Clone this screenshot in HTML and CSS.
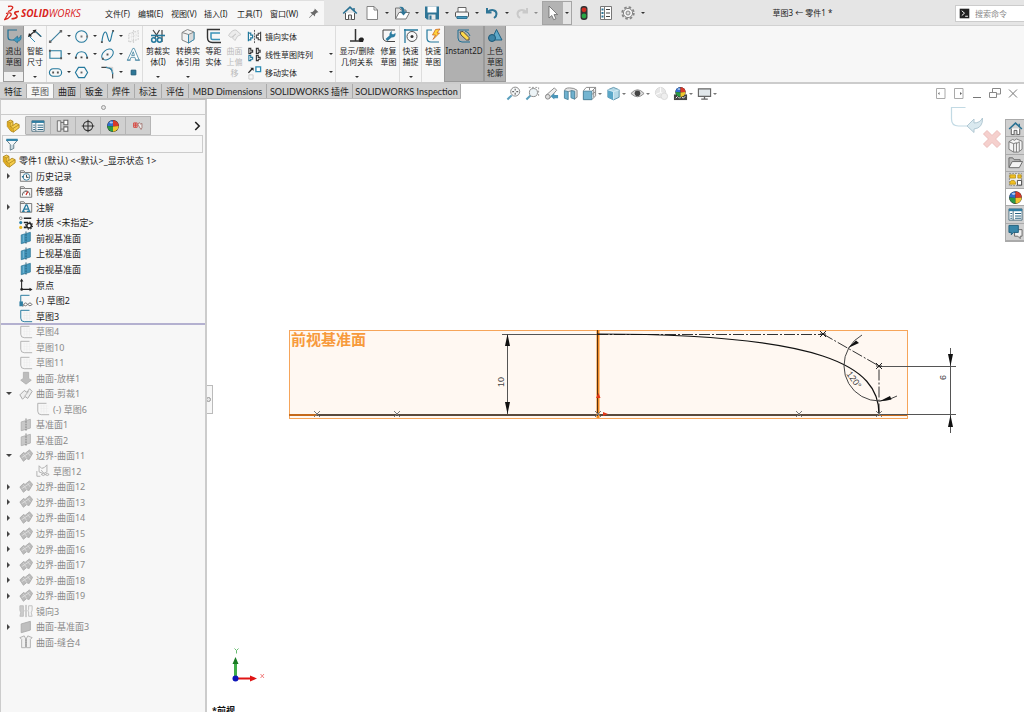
FILE: index.html
```html
<!DOCTYPE html>
<html lang="zh-CN">
<head>
<meta charset="utf-8">
<title>SOLIDWORKS - 草图3 ← 零件1</title>
<link rel="stylesheet" href="styles.css">
</head>
<body>
<svg class="defs" aria-hidden="true">
  <defs>
    <symbol id="logo" viewBox="0 0 16 16"><path d="M4 1.500C7 .8 9.500 1.200 8.500 3.200 7.800 4.800 5.500 6 4 6.500M2 8.500C6 7 8.500 8 6.500 11 5.200 13 3 14 .8 14.500L4 9" fill="none" stroke="#d9231b" stroke-width="1.300"/><path d="M15 6.500C12 6.300 10 7.300 11 8.800 12 10 14 10.500 13 12 12 13.500 9.500 13.800 7.500 13.800" fill="none" stroke="#d9231b" stroke-width="1.500"/></symbol>
    <symbol id="pin" viewBox="0 0 16 16"><path d="M9 2l5 5-2 .3-2.500 2.500-.2 3-2.800-2.800L2 14.500 1.500 14 5.500 9.500 3 7l3-.3L8.700 4z" fill="#6a6a6a"/></symbol>
    <symbol id="home" viewBox="0 0 16 16"><path d="M3.500 8v6.500h9V8" fill="#fff" stroke="#555"/><path d="M1.200 8.500L8 2.200l6.800 6.300" fill="none" stroke="#2a7193" stroke-width="1.700"/><path d="M12 3v3" stroke="#2a7193" stroke-width="1.500"/><path d="M6.500 14.500V10h3v4.500" fill="#ddd" stroke="#555"/></symbol>
    <symbol id="new" viewBox="0 0 16 16"><path d="M3 1.500h7l3.500 3.500v9.500H3z" fill="#fff" stroke="#777" stroke-width=".9"/><path d="M10 1.500V5h3.500" fill="none" stroke="#777" stroke-width=".9"/></symbol>
    <symbol id="open" viewBox="0 0 16 16"><path d="M1.500 14V3h4l1.500 2h5v3" fill="#ddd" stroke="#777"/><path d="M1.500 14L5 7.500h10.500L12 14z" fill="#fff" stroke="#777"/><path d="M5 2c4-1 5.500 1 5.500 4.500H13L9.500 10.500 6 6.500h2C8 4 7 3 5 2z" fill="#2f7596"/></symbol>
    <symbol id="save" viewBox="0 0 16 16"><path d="M1 1.500h14v13H3l-2-2z" fill="#2f7596"/><path d="M3.500 1.500h9v6h-9z" fill="#fff"/><path d="M4.500 9.500h7v5h-7z" fill="#e8e8e8"/><path d="M5.500 10.500h2v4h-2z" fill="#2f7596"/></symbol>
    <symbol id="print" viewBox="0 0 16 16"><path d="M4 7V2.500h8V7" fill="#fff" stroke="#666"/><rect x="1.500" y="7" width="13" height="5" rx="1" fill="#f5f5f5" stroke="#555"/><path d="M3 11.500h10v2H3z" fill="#4b9bbf" stroke="#2f7596"/></symbol>
    <symbol id="undo" viewBox="0 0 16 16"><path d="M3 3v4.500h4.500" fill="none" stroke="#2f7596" stroke-width="2"/><path d="M3.500 7C7 4 12.500 4.500 12.500 9c0 2-1 3-2.500 4" fill="none" stroke="#2f7596" stroke-width="2"/></symbol>
    <symbol id="redo" viewBox="0 0 16 16"><path d="M13 3v4.500H8.500M12.500 7C9 4 3.500 4.500 3.500 9c0 2 1 3 2.500 4" fill="none" stroke="#c9c9c9" stroke-width="2"/></symbol>
    <symbol id="cursor" viewBox="0 0 16 16"><path d="M4 1v12l2.800-2.500 1.900 4.200 2.200-1L9 9.600h3.600z" fill="#fff" stroke="#666" stroke-width=".8"/></symbol>
    <symbol id="traffic" viewBox="0 0 16 16"><rect x="4.500" y="1" width="7" height="14" rx="3" fill="#333"/><circle cx="8" cy="4.800" r="2.400" fill="#cf2d22"/><circle cx="8" cy="11" r="2.400" fill="#28a745"/></symbol>
    <symbol id="options" viewBox="0 0 16 16"><path d="M2.500 1.500h11v13h-11z" fill="#fff" stroke="#777"/><path d="M6.500 2v12" stroke="#777"/><path d="M8 4.500h4M8 8h4M8 11.500h4" stroke="#444"/><path d="M3.500 3.500h2v2h-2zM3.500 7h2v2h-2zM3.500 10.500h2v2h-2z" fill="#2f7596"/></symbol>
    <symbol id="gear" viewBox="0 0 16 16"><circle cx="8" cy="8" r="5.800" fill="none" stroke="#858585" stroke-width="1.800" stroke-dasharray="2.500 2.050"/><circle cx="8" cy="8" r="4.600" fill="#f4f4f4" stroke="#858585"/><circle cx="8" cy="8" r="2" fill="#ddd" stroke="#858585"/></symbol>
    <symbol id="cmd" viewBox="0 0 16 16"><path d="M1 1h14v14H1z" fill="#222"/><path d="M4 4l4 3.500L4 11M9 12h4" fill="none" stroke="#fff" stroke-width="1.400"/></symbol>

    <symbol id="exit" viewBox="0 0 16 16"><path d="M11 2H2v7q0 3 3 3h3" fill="none" stroke="#1f6f94" stroke-width="1.200"/><path d="M7.500 11.800L11.500 8v2.200q2.500 0 3.500-3 1 6-3.500 6.200V15z" fill="#3f97be" stroke="#155a79" stroke-width=".5"/></symbol>
    <symbol id="smart" viewBox="0 0 16 16"><path d="M2.500 7.500L8 3l6 5.500" fill="none" stroke="#333" stroke-width="1.200"/><path d="M1 9l1-4 3 3.300zM9.500 1.500l-4 .8 2.500 3z" fill="#222"/><path d="M2.500 8.500l5.500 5.500M8.500 3.500l6 5" stroke="#2d8cb4"/></symbol>
    <symbol id="line" viewBox="0 0 16 16"><path d="M2.500 13.500l11-11" stroke="#3b7f9e" stroke-width="1.200"/><path d="M1 12.200h2.600v2.600H1zM12.500 1h2.600v2.600h-2.600z" fill="#666"/></symbol>
    <symbol id="circle" viewBox="0 0 16 16"><circle cx="8" cy="8" r="6.200" fill="none" stroke="#24799d" stroke-width="1.100"/><path d="M7 7h2v2H7zM13 7h2v2h-2z" fill="#777"/></symbol>
    <symbol id="spline" viewBox="0 0 16 16"><path d="M2 14C3 4 6 0 7.500 6S10.500 17 12 9c.6-3 1-5 2-7" fill="none" stroke="#24799d" stroke-width="1.200"/><path d="M1 13h2v2H1zM13 1h2v2h-2z" fill="#555"/></symbol>
    <symbol id="ghostplane" viewBox="0 0 16 16"><path d="M3 5l10-3v9L3 14zM8 1v14" fill="none" stroke="#d2d2d2" stroke-width="1.200" stroke-dasharray="2 1"/><path d="M6 5v8M10.500 3v9M3 9l10-3" stroke="#dedede" stroke-dasharray="1 1"/></symbol>
    <symbol id="rect" viewBox="0 0 16 16"><path d="M2 4h12v8H2z" fill="none" stroke="#24799d" stroke-width="1.200"/><path d="M1 3h2v2H1zM13 11h2v2h-2z" fill="#555"/></symbol>
    <symbol id="arc" viewBox="0 0 16 16"><path d="M2 11C3 3 13 3 14 11" fill="none" stroke="#24799d" stroke-width="1.200"/><path d="M1 10.500h2v2H1zM13 10.500h2v2h-2zM7 10h2v2H7z" fill="#444"/></symbol>
    <symbol id="ellipse" viewBox="0 0 16 16"><ellipse cx="8" cy="8" rx="7" ry="4.800" transform="rotate(-40 8 8)" fill="none" stroke="#24799d" stroke-width="1.100"/><path d="M7 7h2v2H7zM2 11.500h2v2H2z" fill="#555"/></symbol>
    <symbol id="text" viewBox="0 0 16 16"><path d="M1.500 14L7.300 1.500h1.500L14 14h-3.500l-1-3H5.300L4 14zM6 9h3L7.700 5z" fill="#fff" stroke="#4c89a5" stroke-width=".9"/><path d="M1 14h4M9.500 14H15" stroke="#4c89a5"/></symbol>
    <symbol id="slot" viewBox="0 0 16 16"><rect x="1.500" y="4" width="13" height="8" rx="4" fill="none" stroke="#24799d" stroke-width="1.200"/><path d="M4.500 7h2v2h-2zM9.500 7h2v2h-2z" fill="#555"/></symbol>
    <symbol id="polygon" viewBox="0 0 16 16"><path d="M4.800 2.500h6.400L14.500 8l-3.300 5.500H4.800L1.500 8z" fill="none" stroke="#24799d" stroke-width="1.200"/><path d="M7 7h2v2H7z" fill="#666"/></symbol>
    <symbol id="fillet" viewBox="0 0 16 16"><path d="M1.500 2.500h5q7 0 7 7v5" fill="none" stroke="#444" stroke-width="1.200"/><path d="M6.500 2.500q7 0 7 7" fill="none" stroke="#2d8cb4" stroke-width="1.400"/><path d="M8 2.500h5.500V8" fill="none" stroke="#bbb" stroke-width=".7"/></symbol>
    <symbol id="point" viewBox="0 0 16 16"><path d="M5.500 5.500h5v5h-5z" fill="#2d7797" stroke="#1d5975"/></symbol>
    <symbol id="trim" viewBox="0 0 16 16"><path d="M3 2l6 8.500M9.500 2L4.500 10.500M12 2v12" stroke="#444" stroke-width="1.200"/><circle cx="3.800" cy="12" r="2.200" fill="none" stroke="#24799d" stroke-width="1.500"/><circle cx="9.600" cy="12" r="2.200" fill="none" stroke="#24799d" stroke-width="1.500"/><path d="M1 7.500h14" stroke="#24799d" stroke-width="1.600"/></symbol>
    <symbol id="convert" viewBox="0 0 16 16"><path d="M2 4.500l5.500-3L14 4v7.500L8.500 15 2 12z" fill="#f2f2f2" stroke="#888"/><path d="M8.500 6.500V15L14 11.500V4z" fill="#d9d9d9"/><path d="M2 4.500l6.500 2L14 4M8.500 15V6.500" fill="none" stroke="#888"/><path d="M8.500 6.500V15L14 11.500V4" fill="none" stroke="#358aae"/></symbol>
    <symbol id="offset" viewBox="0 0 16 16"><path d="M14 1.500H1.500v8q0 5 5 5H15" fill="none" stroke="#333" stroke-width="1.400"/><path d="M14 5H5v5q0 1.500 1.500 1.500H14" fill="none" stroke="#3b92b8" stroke-width="1.500"/></symbol>
    <symbol id="surfoff" viewBox="0 0 16 16"><path d="M1.500 7.500Q5 1.500 9 2l5 4.500q-4 .5-6 6L5.500 10q1-3 3.500-4L4 9.500z" fill="#ececec" stroke="#ccc"/></symbol>
    <symbol id="mirror" viewBox="0 0 16 16"><path d="M1.500 3v10M1.500 4.500H4v2h2v3H4v2H1.500" fill="none" stroke="#24799d" stroke-width="1.300"/><path d="M14.500 3v10M14.500 4.500H12v2h-2v3h2v2h2.500" fill="#fff" stroke="#444" stroke-width="1.200"/><path d="M8 1v14" stroke="#555" stroke-dasharray="2 1"/></symbol>
    <symbol id="pattern" viewBox="0 0 16 16"><g fill="#fff" stroke="#333" stroke-width="1.200"><path d="M2 1.500h2v2h2v2H4v1.500H2zM10 1.500h2v2h2v2h-2v1.500h-2zM10 9h2v2h2v2h-2v1.500h-2z"/><path d="M2 9h2v2h2v2H4v1.500H2z" stroke="#24799d"/></g></symbol>
    <symbol id="move" viewBox="0 0 16 16"><path d="M9.500 2h5v5h-5z" fill="#fff" stroke="#2d8cb4" stroke-width="1.400"/><path d="M2 10.500h4.500V15H2z" fill="none" stroke="#ccc"/><path d="M1.500 8.500L5.500 4" stroke="#222" stroke-width="1.300"/><path d="M3.500 3h3.500v3.500z" fill="#222"/></symbol>
    <symbol id="relations" viewBox="0 0 16 16"><path d="M6.500 1v12M1 13h11" stroke="#333" stroke-width="1.500"/><path d="M9.500 11l2-1.500h2L15 11l-1 3h-3.500z" fill="#222"/></symbol>
    <symbol id="repair" viewBox="0 0 16 16"><path d="M14 2H2v7q0 4.500 5 4.500h7" fill="none" stroke="#444"/><path d="M4.500 11l4-3.500Q8 4.500 11 3l-.5 2.500 1.500 1L14.500 5q.5 4.500-4 4.500L6.500 13z" fill="#2d7da1"/></symbol>
    <symbol id="snap" viewBox="0 0 16 16"><path d="M2 1v14M1 2h14" stroke="#24799d" stroke-width="1.300"/><circle cx="9" cy="8.500" r="5" fill="none" stroke="#555"/><circle cx="9" cy="8.500" r="1.500" fill="#333"/></symbol>
    <symbol id="rapid" viewBox="0 0 16 16"><path d="M7 2H2v8q0 4 4 4h8" fill="none" stroke="#24799d" stroke-width="1.200"/><path d="M10.500 1.500L7.500 7h3L8 11.500 14.500 5H12l3-4z" fill="#ffd23b" stroke="#c65a17" stroke-width=".7"/></symbol>
    <symbol id="instant" viewBox="0 0 16 16"><path d="M13 2H2v8q0 4 4 4h8" fill="none" stroke="#1f6f94"/><path d="M4 4l3-.5 6 6V12h-2.500L5 7z" fill="#ffd94a" stroke="#333" stroke-width=".8"/><path d="M9 3q4 1 5 5" fill="none" stroke="#1f6f94"/></symbol>
    <symbol id="shaded" viewBox="0 0 16 16"><path d="M9.500 1.500L15 12H4.500z" fill="#5fa9c9" stroke="#1f6284"/><circle cx="5" cy="10" r="3.500" fill="#3e85a7" stroke="#1f5876"/></symbol>

    <symbol id="zoomfit" viewBox="0 0 16 16"><path d="M1.500 14.500L6 10" stroke="#5a9fbd" stroke-width="2.200"/><circle cx="9.800" cy="6" r="4.800" fill="#f6f8f9" stroke="#888"/><path d="M9.800 2.800v2M9.800 7.200v2M6.600 6h2M11 6h2" stroke="#666" stroke-width="1.200"/></symbol>
    <symbol id="zoomarea" viewBox="0 0 16 16"><path d="M1.500 14.500L6 10" stroke="#5a9fbd" stroke-width="2.200"/><circle cx="9" cy="7" r="4.300" fill="#edf4f7" stroke="#888"/><path d="M4 1.500h10.500V12" fill="none" stroke="#999" stroke-dasharray="2 1.500"/></symbol>
    <symbol id="prevview" viewBox="0 0 16 16"><path d="M2 10l9-8 2.500 2.500L6 13z" fill="#eee" stroke="#888"/><circle cx="4" cy="11.500" r="2.500" fill="#ddd" stroke="#888"/><path d="M7 11l4-3.500v2h4v3.500h-4v1.500z" fill="#4b95b8"/></symbol>
    <symbol id="section" viewBox="0 0 16 16"><path d="M1.500 5Q2 2 7 2t8 2.500V12l-3 2V6Q10 4 5.500 6" fill="#e6e6e6" stroke="#888"/><path d="M1.500 5L5.500 6v8.500l-4-1.500zM8.500 5l4 .5V14l-4-1.500z" fill="#6fb1cf" stroke="#4d87a1"/></symbol>
    <symbol id="orient" viewBox="0 0 16 16"><path d="M4.500 1.500h10v9l-4 4H1.500V5z" fill="#fff" stroke="#888"/><path d="M1.500 5.500h9v9h-9z" fill="#74b5d1" stroke="#4d87a1"/><path d="M10.500 5.500l4-4M8 1.500v3M10.500 9l4-3M12.500 4v8" stroke="#888"/></symbol>
    <symbol id="display" viewBox="0 0 16 16"><path d="M2 4l6-2.500L14 4v8l-6 2.800L2 12z" fill="#b5d9e7" stroke="#5d94ac"/><path d="M2 4l6 2v8.800L2 12z" fill="#5aa7c8"/><path d="M2 4l6 2 6-2M8 6v8.500" stroke="#d8edf5" fill="none"/></symbol>
    <symbol id="eye" viewBox="0 0 16 16"><path d="M1 8q7-8 14 0-7 7-14 0z" fill="#ddd" stroke="#888"/><circle cx="8" cy="7.800" r="3" fill="#444"/></symbol>
    <symbol id="ballgray" viewBox="0 0 16 16"><circle cx="7" cy="7" r="5.500" fill="#e6e6e6" stroke="#d8d8d8"/><path d="M7 1.500V7l5 2M7 7l-5 2" stroke="#fff" fill="none"/><circle cx="11" cy="11" r="3.500" fill="#eee" stroke="#dadada"/></symbol>
    <symbol id="ball" viewBox="0 0 16 16"><circle cx="8" cy="8" r="6.800" fill="#222"/><path d="M8 1.500A6.500 6.500 0 0 0 1.500 8L8 8.500z" fill="#2e6fd0"/><path d="M8 1.500A6.500 6.500 0 0 1 14.500 8L8 8.500z" fill="#d93829"/><path d="M1.500 8A6.500 6.500 0 0 0 8 14.500v-6z" fill="#2b9a45"/><path d="M14.500 8A6.500 6.500 0 0 1 8 14.500v-6z" fill="#f0c72f"/><ellipse cx="6" cy="4" rx="2" ry="1.200" fill="#fff" opacity=".6"/></symbol>
    <symbol id="scene" viewBox="0 0 16 16"><path d="M1 9h14v6H1z" fill="#444"/><path d="M3 13l2-2 2 2 2-2 2 2 2-2" stroke="#fff" fill="none"/><use href="#ball" x="1.500" y="0" width="13" height="13"/></symbol>
    <symbol id="monitor" viewBox="0 0 16 16"><path d="M1.500 3h13v8h-13z" fill="#e1e7ea" stroke="#666" stroke-width="1.200"/><path d="M8 11v3M4.500 14h7" stroke="#666" stroke-width="1.400"/></symbol>
    <symbol id="winleft" viewBox="0 0 16 16"><path d="M3.500 3.500h8.500v10H3.500z" fill="none" stroke="#aaa"/><path d="M6.500 7v3L5 8.500z" fill="#666"/></symbol>
    <symbol id="winright" viewBox="0 0 16 16"><path d="M3.500 3.500h8.500v10H3.500z" fill="none" stroke="#aaa"/><path d="M9 7v3l2-1.500z" fill="#666"/></symbol>
    <symbol id="winmin" viewBox="0 0 16 16"><path d="M4 12.500h8" stroke="#777"/></symbol>
    <symbol id="winres" viewBox="0 0 16 16"><path d="M2.500 7.500h7v5h-7zM5.500 7.500v-4h8v5.500h-4" fill="none" stroke="#888"/></symbol>
    <symbol id="winclose" viewBox="0 0 16 16"><path d="M4 4.500l8 8M12 4.500l-8 8" stroke="#777"/></symbol>

    <symbol id="part" viewBox="0 0 16 16"><path d="M1.500 3L5 1.200l3 1.500v4.500l3.500-2.400L15 6.500V10l-6.500 5-3-1.200L1.500 8.500z" fill="#f6cd4c" stroke="#a57c14" stroke-width=".9"/><path d="M1.500 3l3.300 1.500L8 2.700M4.800 4.500V9L8 7.200M4.800 9L8 10.800l7-4.300M8 10.800l.5 4" fill="none" stroke="#a57c14" stroke-width=".8"/><path d="M1.800 3.500l2.600 1.300V9l3.200 2v3.200L5.700 13.500 1.800 8.300z" fill="#dda91f"/></symbol>
    <symbol id="props" viewBox="0 0 16 16"><path d="M1 2h14v12H1z" fill="#fff" stroke="#4d6f80"/><path d="M1 2h14v2.500H1z" fill="#2f7ea3"/><path d="M5.500 4v10" stroke="#4d6f80"/><path d="M7.500 7H14M7.500 9.500H14M7.500 12H14M2.500 7h2M2.500 9.500h2M2.500 12h2" stroke="#2b6482" stroke-width="1.100"/></symbol>
    <symbol id="config" viewBox="0 0 16 16"><path d="M1.500 2h4v12h-4zM5.500 4h4M5.500 11.500h4" fill="#eee" stroke="#666"/><path d="M9 1.500h4.500v5H9zM9 9h4.500v5H9z" fill="#fff" stroke="#666" stroke-width="1.200"/></symbol>
    <symbol id="target" viewBox="0 0 16 16"><circle cx="8" cy="8" r="5.300" fill="none" stroke="#333" stroke-width="1.200"/><path d="M8 .8v14.400M.8 8h14.400" stroke="#333" stroke-width="1.200"/></symbol>
    <symbol id="cam" viewBox="0 0 16 16"><path d="M3 4.500h4v5H3zM3 7h4M5 4.500v5" fill="none" stroke="#d8463e" stroke-width="1.100"/><path d="M8 6l1.500-2 1.500 2 1.500-1v5l-1 2-2-3z" fill="#eee" stroke="#9a6964" stroke-width=".9"/></symbol>
    <symbol id="funnel" viewBox="0 0 16 16"><path d="M1.500 3.500h13L10 8.500V13l-4 2V8.500z" fill="#f3f7f9" stroke="#506e7c"/><path d="M1.500 2h13v2.500h-13z" fill="#3184aa"/><path d="M8 9v5" stroke="#91afbc"/></symbol>
    <symbol id="folder" viewBox="0 0 16 16"><path d="M1.500 14V2h4L7 4h7.500v10z" fill="#f4f4f4" stroke="#6b6b6b"/><path d="M1.500 4h5" stroke="#6b6b6b"/></symbol>
    <symbol id="history" viewBox="0 0 16 16"><use href="#folder" width="16" height="16"/><circle cx="8.500" cy="9" r="3.800" fill="#fff" stroke="#2d7698"/><path d="M8.500 6.500V9.500h2.500" fill="none" stroke="#222"/><path d="M3 8h3L4.500 10.500z" fill="#2d7698"/></symbol>
    <symbol id="sensor" viewBox="0 0 16 16"><use href="#folder" width="16" height="16"/><path d="M4 12a4.200 4.200 0 1 1 8.200 0" fill="#fff" stroke="#555"/><path d="M8 11.500l2-4" stroke="#d02c24" stroke-width="1.500"/><path d="M5 9h1.500M8 6.500V8" stroke="#555"/></symbol>
    <symbol id="note" viewBox="0 0 16 16"><use href="#folder" width="16" height="16"/><path d="M3.500 13h3M9 13h4M4.500 13L8 5.500h1L12 13M6 10.500h4.500" fill="none" stroke="#25799e" stroke-width="1.500"/></symbol>
    <symbol id="material" viewBox="0 0 16 16"><circle cx="2" cy="2.500" r="1.500" fill="#fff" stroke="#777"/><circle cx="2" cy="7.500" r="1.800" fill="#2d83aa"/><circle cx="2" cy="13" r="1.800" fill="#e8b51f"/><path d="M5.500 2.500H14M5.500 7.500H10M5.500 13H8" stroke="#222" stroke-width="1.800"/><circle cx="11.500" cy="11" r="4" fill="none" stroke="#222" stroke-width="1.200" stroke-dasharray="1.600 1.500"/><circle cx="11.500" cy="11" r="2.600" fill="#fff" stroke="#222" stroke-width="1.700"/></symbol>
    <symbol id="plane" viewBox="0 0 16 16"><path d="M2.500 4.500L13 1.500v10L2.500 14.500z" fill="#4698bd" stroke="#2c7495" stroke-width=".8"/><path d="M8 .5v15" stroke="#1f536d" stroke-dasharray="2 1"/><path d="M5 4.500v8" stroke="#80bdd7"/></symbol>
    <symbol id="origin" viewBox="0 0 16 16"><path d="M3 3v10h10" fill="none" stroke="#222" stroke-width="1.200"/><path d="M1 4l2-3.500L5 4zM12 11l3.500 2L12 15z" fill="#222"/><circle cx="3" cy="13" r="1.500" fill="#222"/></symbol>
    <symbol id="sketch" viewBox="0 0 16 16"><path d="M12 1.500H2v9q0 4 4 4h9" fill="none" stroke="#24799d" stroke-width="1.100"/><path d="M5 4.500h9M5 7.500h9M5 10.500h9M6 3v10M9 3v10M12 3v10" stroke="#e8e8e8" stroke-width=".6"/></symbol>
    <symbol id="sketchg" viewBox="0 0 16 16"><path d="M12 1.500H2v9q0 4 4 4h9" fill="none" stroke="#aaa"/><path d="M5 4.500h9M5 7.500h9M5 10.500h9M6 3v10M9 3v10M12 3v10" stroke="#ececec" stroke-width=".6"/></symbol>
    <symbol id="sketchd" viewBox="0 0 16 16"><path d="M12 1.500H2v9" fill="none" stroke="#24799d" stroke-width="1.100"/><path d="M.5 8.500h4V14h-4z" fill="#2e7ea2"/><path d="M5 12q2.500-3.500 5 0-2.500 3-5 0zM10 12q2.500-3.500 5 0-2.500 3-5 0zM4 14l2-1" fill="#fff" stroke="#666"/></symbol>
    <symbol id="loft" viewBox="0 0 16 16"><path d="M5 1.500h6v7l3 2L8 15l-6-4.500 3-2z" fill="#bdbdbd" stroke="#b0b0b0"/></symbol>
    <symbol id="strim" viewBox="0 0 16 16"><path d="M1 9l5-5 3 2 3-4 3 3-5 8-3-2-3 3z" fill="#eee" stroke="#a0a0a0"/><path d="M6 11l5-6" stroke="#aaa"/></symbol>
    <symbol id="boundary" viewBox="0 0 16 16"><path d="M1 8l4-4 2 1 5-4 3.500 4-4 7-3-1L5 14z" fill="#bbb" stroke="#a8a8a8"/><path d="M3 10l9-6M5 6l4 5M10 4l3 4" stroke="#ddd"/></symbol>
    <symbol id="planeg" viewBox="0 0 16 16"><path d="M2.500 4.500L13 1.500v10L2.500 14.500z" fill="#c8c8c8" stroke="#b0b0b0"/><path d="M8 .5v15" stroke="#777" stroke-dasharray="2 1"/></symbol>
    <symbol id="surfg" viewBox="0 0 16 16"><path d="M2.500 4.500L13 1.500v10L2.500 14.500z" fill="#bfbfbf" stroke="#aaa"/></symbol>
    <symbol id="derived" viewBox="0 0 16 16"><path d="M1 8v6h4M3.500 9V2l3 3 3-1 3-3v8l-4 2zM6 7l4 5" fill="none" stroke="#aaa"/><path d="M6 12q2.500-3 4.500 0-2 2.500-4.500 0zM10.500 12q2.500-3 4.500 0-2 2.500-4.500 0z" fill="#eee" stroke="#aaa"/></symbol>
    <symbol id="mirrorg" viewBox="0 0 16 16"><path d="M1 2h4v4l1 2-1 1v5H1l1-4-1-3z" fill="#ccc" stroke="#bbb"/><path d="M15 2h-4v4l-1 2 1 1v5h4l-1-4 1-3z" fill="#f4f4f4" stroke="#bbb"/><path d="M8 1v14" stroke="#999"/></symbol>
    <symbol id="knit" viewBox="0 0 16 16"><path d="M1 3l5-2 1.500 3v10.500H3V5zM15 3l-5-2-1.500 3v10.500H13V5z" fill="#f0f0f0" stroke="#aaa"/><path d="M8 4v10" stroke="#888" stroke-dasharray="1 1"/></symbol>

    <symbol id="library" viewBox="0 0 16 16"><path d="M1 4l4-2.500 2 1 2-1.500 2.500 1L15 3.500V12l-4 3H6l-5-3z" fill="#f5f5f5" stroke="#777"/><path d="M1 4l5 2v9M6 6l3-1v10M9 6l3-2M12 4v10" fill="none" stroke="#777"/></symbol>
    <symbol id="explorer" viewBox="0 0 16 16"><path d="M1 13V3h4l1.500 2H13v2.500" fill="#bbb" stroke="#666"/><path d="M1 13.500L4.500 7h11L12 13.500z" fill="#f4f4f4" stroke="#666"/></symbol>
    <symbol id="palette" viewBox="0 0 16 16"><path d="M1.500 1.500h13v13h-13z" fill="#eee" stroke="#888" stroke-dasharray="2 1"/><path d="M2 3h6v3.500H2zM10.500 3H14v3.500h-3.500zM2 13v-2l1.500-2h3L8 11v2z" fill="#f1bf21" stroke="#b08c1a" stroke-width=".8"/><path d="M10 9h4.500v5H10z" fill="#fff" stroke="#444"/></symbol>
    <symbol id="forum" viewBox="0 0 16 16"><path d="M7 6h8v7h-2v2.500L10.500 13H7z" fill="#eee" stroke="#666"/><path d="M1 1.500h10v7.500H6L3.500 11.500V9H1z" fill="#3986a9" stroke="#205f7d"/></symbol>
  </defs>
</svg>

<header class="titlebar">
  <div class="menubar">
    <svg class="logo"><use href="#logo"/></svg>
    <span class="brand"><b>SOLID</b>WORKS</span>
    <nav class="menus">
      <button>文件(F)</button><button>编辑(E)</button><button>视图(V)</button><button>插入(I)</button><button>工具(T)</button><button>窗口(W)</button>
    </nav>
    <button class="pin" aria-label="固定"><svg><use href="#pin"/></svg></button>
  </div>
  <div class="quick">
    <button class="ic home" aria-label="主页"><svg><use href="#home"/></svg></button>
    <button class="ic" aria-label="新建"><svg><use href="#new"/></svg></button><button class="drop" aria-label="新建选项"></button>
    <button class="ic" aria-label="打开"><svg><use href="#open"/></svg></button><button class="drop" aria-label="打开选项"></button>
    <button class="ic" aria-label="保存"><svg><use href="#save"/></svg></button><button class="drop" aria-label="保存选项"></button>
    <button class="ic" aria-label="打印"><svg><use href="#print"/></svg></button><button class="drop" aria-label="打印选项"></button>
    <button class="ic" aria-label="撤销"><svg><use href="#undo"/></svg></button><button class="drop" aria-label="撤销选项"></button>
    <button class="ic" aria-label="重做"><svg><use href="#redo"/></svg></button><button class="drop dim-drop" aria-label="重做选项"></button>
    <span class="picker"><button class="pick" aria-label="选择"><svg><use href="#cursor"/></svg></button><button class="drop" aria-label="选择选项"></button></span>
    <button class="ic" aria-label="重建"><svg><use href="#traffic"/></svg></button>
    <button class="ic props" aria-label="文件属性"><svg><use href="#options"/></svg></button>
    <button class="ic props" aria-label="选项"><svg><use href="#gear"/></svg></button><button class="drop" aria-label="更多选项"></button>
  </div>
  <h1 class="doc">草图3 ← 零件1 *</h1>
  <label class="search"><svg><use href="#cmd"/></svg><input type="text" placeholder="搜索命令" aria-label="搜索命令"></label>
</header>

<section class="ribbon">
  <button class="tool w21 on exit"><svg><use href="#exit"/></svg><span>退出<br>草图</span><i class="caret"></i></button>
  <button class="tool w22"><svg><use href="#smart"/></svg><span>智能<br>尺寸</span><i class="caret"></i></button>
  <div class="entities">
    <button aria-label="直线"><svg><use href="#line"/></svg><i class="caret"></i></button><button aria-label="圆"><svg><use href="#circle"/></svg><i class="caret"></i></button><button aria-label="样条曲线"><svg><use href="#spline"/></svg><i class="caret"></i></button><button aria-label="基准面"><svg><use href="#ghostplane"/></svg></button>
    <button aria-label="矩形"><svg><use href="#rect"/></svg><i class="caret"></i></button><button aria-label="圆弧"><svg><use href="#arc"/></svg><i class="caret"></i></button><button aria-label="椭圆"><svg><use href="#ellipse"/></svg><i class="caret"></i></button><button aria-label="文字"><svg><use href="#text"/></svg></button>
    <button aria-label="槽口"><svg><use href="#slot"/></svg><i class="caret"></i></button><button aria-label="多边形"><svg><use href="#polygon"/></svg></button><button aria-label="圆角"><svg><use href="#fillet"/></svg><i class="caret"></i></button><button aria-label="点"><svg><use href="#point"/></svg></button>
  </div>
  <button class="tool w30"><svg><use href="#trim"/></svg><span>剪裁实<br>体(I)</span><i class="caret"></i></button>
  <button class="tool w30"><svg><use href="#convert"/></svg><span>转换实<br>体引用</span><i class="caret"></i></button>
  <button class="tool w21"><svg><use href="#offset"/></svg><span>等距<br>实体</span></button>
  <button class="tool w21" disabled><svg><use href="#surfoff"/></svg><span>曲面<br>上偏<br>移</span></button>
  <div class="stack">
    <button><svg><use href="#mirror"/></svg>镜向实体</button>
    <button><svg><use href="#pattern"/></svg>线性草图阵列<i class="caret"></i></button>
    <button><svg><use href="#move"/></svg>移动实体<i class="caret"></i></button>
  </div>
  <button class="tool w42"><svg><use href="#relations"/></svg><span>显示/删除<br>几何关系</span><i class="caret"></i></button>
  <button class="tool w22 sep"><svg><use href="#repair"/></svg><span>修复<br>草图</span></button>
  <button class="tool w22 sep"><svg><use href="#snap"/></svg><span>快速<br>捕捉</span><i class="caret"></i></button>
  <button class="tool w22"><svg><use href="#rapid"/></svg><span>快速<br>草图</span></button>
  <button class="tool w40 on"><svg><use href="#instant"/></svg><span>Instant2D</span></button>
  <button class="tool w22 on"><svg><use href="#shaded"/></svg><span>上色<br>草图<br>轮廓</span></button>
</section>

<div class="tabrow">
  <nav class="tabs">
    <button>特征</button><button class="active">草图</button><button>曲面</button><button>钣金</button><button>焊件</button><button>标注</button><button>评估</button><button class="w77">MBD Dimensions</button><button class="w86">SOLIDWORKS 插件</button><button class="w108">SOLIDWORKS Inspection</button>
  </nav>
  <div class="hud">
    <button aria-label="整屏显示"><svg><use href="#zoomfit"/></svg></button>
    <button aria-label="局部放大"><svg><use href="#zoomarea"/></svg></button>
    <button aria-label="上一视图"><svg><use href="#prevview"/></svg></button>
    <button aria-label="剖面视图"><svg><use href="#section"/></svg></button>
    <button aria-label="视图定向"><svg><use href="#orient"/></svg><i class="caret"></i></button>
    <button aria-label="显示样式"><svg><use href="#display"/></svg><i class="caret"></i></button>
    <button aria-label="隐藏/显示"><svg><use href="#eye"/></svg><i class="caret"></i></button>
    <button aria-label="编辑外观"><svg><use href="#ballgray"/></svg></button>
    <button aria-label="应用布景"><svg><use href="#scene"/></svg><i class="caret"></i></button>
    <button aria-label="视图设置"><svg><use href="#monitor"/></svg><i class="caret"></i></button>
  </div>
  <div class="winbtns">
    <button aria-label="左侧平铺"><svg><use href="#winleft"/></svg></button>
    <button aria-label="右侧平铺"><svg><use href="#winright"/></svg></button>
    <button aria-label="最小化"><svg><use href="#winmin"/></svg></button>
    <button aria-label="还原"><svg><use href="#winres"/></svg></button>
    <button aria-label="关闭"><svg><use href="#winclose"/></svg></button>
  </div>
</div>

<main class="work">
  <aside class="side">
    <div class="grip"><i class="dot"></i></div>
    <div class="panes">
      <button class="active" aria-label="设计树"><svg><use href="#part"/></svg></button>
      <button aria-label="属性"><svg><use href="#props"/></svg></button>
      <button aria-label="配置"><svg><use href="#config"/></svg></button>
      <button aria-label="尺寸专家"><svg><use href="#target"/></svg></button>
      <button aria-label="外观"><svg><use href="#ball"/></svg></button>
      <button aria-label="加工"><svg><use href="#cam"/></svg></button>
      <button class="more" aria-label="更多"><svg viewBox="0 0 16 16"><path d="M6 3.500l4.500 4.500L6 12.500" fill="none" stroke="#222" stroke-width="1.800"/></svg></button>
    </div>
    <label class="filter"><svg><use href="#funnel"/></svg><input type="text" aria-label="过滤"></label>
    <ul class="tree">
      <li class="root"><svg><use href="#part"/></svg>零件1 (默认) &lt;&lt;默认&gt;_显示状态 1&gt;</li>
      <li><i class="tw"></i><svg><use href="#history"/></svg>历史记录</li>
      <li><svg><use href="#sensor"/></svg>传感器</li>
      <li><i class="tw"></i><svg><use href="#note"/></svg>注解</li>
      <li><svg><use href="#material"/></svg>材质 &lt;未指定&gt;</li>
      <li><svg><use href="#plane"/></svg>前视基准面</li>
      <li><svg><use href="#plane"/></svg>上视基准面</li>
      <li><svg><use href="#plane"/></svg>右视基准面</li>
      <li><svg><use href="#origin"/></svg>原点</li>
      <li><svg><use href="#sketchd"/></svg>(-) 草图2</li>
      <li><svg><use href="#sketch"/></svg>草图3</li>
      <li class="off rollback"><svg><use href="#sketchg"/></svg>草图4</li>
      <li class="off"><svg><use href="#sketchg"/></svg>草图10</li>
      <li class="off"><svg><use href="#sketchg"/></svg>草图11</li>
      <li class="off"><svg><use href="#loft"/></svg>曲面-放样1</li>
      <li class="off"><i class="tw open"></i><svg><use href="#strim"/></svg>曲面-剪裁1</li>
      <li class="off child"><svg><use href="#sketchg"/></svg>(-) 草图6</li>
      <li class="off"><svg><use href="#planeg"/></svg>基准面1</li>
      <li class="off"><svg><use href="#planeg"/></svg>基准面2</li>
      <li class="off"><i class="tw open"></i><svg><use href="#boundary"/></svg>边界-曲面11</li>
      <li class="off child"><svg><use href="#derived"/></svg>草图12</li>
      <li class="off"><i class="tw"></i><svg><use href="#boundary"/></svg>边界-曲面12</li>
      <li class="off"><i class="tw"></i><svg><use href="#boundary"/></svg>边界-曲面13</li>
      <li class="off"><i class="tw"></i><svg><use href="#boundary"/></svg>边界-曲面14</li>
      <li class="off"><i class="tw"></i><svg><use href="#boundary"/></svg>边界-曲面15</li>
      <li class="off"><i class="tw"></i><svg><use href="#boundary"/></svg>边界-曲面16</li>
      <li class="off"><i class="tw"></i><svg><use href="#boundary"/></svg>边界-曲面17</li>
      <li class="off"><i class="tw"></i><svg><use href="#boundary"/></svg>边界-曲面18</li>
      <li class="off"><i class="tw"></i><svg><use href="#boundary"/></svg>边界-曲面19</li>
      <li class="off"><svg><use href="#mirrorg"/></svg>镜向3</li>
      <li class="off"><i class="tw"></i><svg><use href="#surfg"/></svg>曲面-基准面3</li>
      <li class="off"><svg><use href="#knit"/></svg>曲面-缝合4</li>
    </ul>
  </aside>

  <section class="view">
    <svg class="canvas">
      <g transform="translate(-207 -99)">
        <rect x="289.500" y="330.500" width="618" height="88" fill="#fff8f2" stroke="#f6a55a"/>
        <text x="291" y="345" class="plane-name">前视基准面</text>
        <path d="M289 415H907" stroke="#c46a1c" stroke-width="2"/>
        <path d="M317 415H879" stroke="#5a4a3c" stroke-width="2"/>
        <path d="M598 330v88" stroke="#f28a22" stroke-width="3"/><path d="M597.500 330v86" stroke="#5a3210"/>
        <path d="M502 334.500H597M507.500 335v79" stroke="#555"/>
        <path d="M507.500 334l2.500 12h-5zM507.500 414l2.500-12h-5z" fill="#111"/>
        <path d="M597 334.500H823" stroke="#333" stroke-dasharray="11 2 2 2" fill="none"/>
        <path d="M823 334L879 366V414" stroke="#333" stroke-dasharray="11 2 2 2" fill="none"/>
        <path d="M597 334C823 334 879 366 879 414" stroke="#111" stroke-width="1.200" fill="none"/>
        <path d="M862 335A35 35 0 0 0 844 366A35 35 0 0 0 897 396" stroke="#444" fill="none"/>
        <path d="M848 348l8-7.500 3 2.500zM879 401.500l11-5.500 1.500 3.500z" fill="#111"/>
        <path d="M879 366.500h77M879 414.500h77M950.500 348v85" stroke="#555"/>
        <path d="M950.500 366l2.500-12h-5zM950.500 415l2.500 12h-5z" fill="#111"/>
        <g stroke="#222"><path d="M820 331l6 6M826 331l-6 6M820 334h6M876 363l6 6M882 363l-6 6M876 366h6"/></g>
        <g stroke="#777"><path d="M314 411l6 6M320 411l-6 6M394 411l6 6M400 411l-6 6M595 411l6 6M601 411l-6 6M796 411l6 6M802 411l-6 6M876 411l6 6M882 411l-6 6"/></g>
        <path d="M596 398l2.500-5 2 5zM603 412l5 2-5 2z" fill="#e33818"/>
        <text class="dim" transform="translate(504 387) rotate(-90)">10</text>
        <text class="dim" transform="translate(946 380) rotate(-90)">6</text>
        <text class="dim" transform="translate(846 374) rotate(54)">120°</text>
        <path d="M235.500 678v-14" stroke="#3fae49" stroke-width="3"/><path d="M235.500 657l3 7h-6z" fill="#187a22"/>
        <path d="M236 678.500h14" stroke="#e01414" stroke-width="2"/><path d="M257 678.500l-7-3v6z" fill="#e01414"/>
        <circle cx="235.500" cy="678.500" r="3" fill="#0e16b8"/>
        <path d="M234.500 648.500l2 2 2-2M236.500 650.500v3" stroke="#58b562" fill="none" stroke-width=".9"/>
        <path d="M260.500 674l3.500 4M264 674l-3.500 4" stroke="#ef7272" fill="none" stroke-width=".9"/>
        <g opacity=".9"><path d="M965.500 107.500h-14V119q0 7 7 7h9" fill="none" stroke="#bcd6e2" stroke-width="1.200"/><path d="M967 126l7-7v4q6 0 8.500-5 .5 10-8.500 11v3.500z" fill="#d7e7ee" stroke="#a9c3cf"/><path d="M987 130.500l5 5 5-5 3.500 3.500-5 5 5 5-3.500 3.500-5-5-5 5-3.500-3.500 5-5-5-5z" fill="#f5cbc8" stroke="#eab8b4"/></g>
      </g>
    </svg>
    <button class="flyout" aria-label="折叠面板"><i class="dot"></i></button>
    <span class="viewname">*前视</span>
    <nav class="taskpane">
      <button aria-label="资源"><svg><use href="#home"/></svg></button>
      <button aria-label="设计库"><svg><use href="#library"/></svg></button>
      <button aria-label="文件探索器"><svg><use href="#explorer"/></svg></button>
      <button aria-label="视图调色板"><svg><use href="#palette"/></svg></button>
      <button class="active" aria-label="外观"><svg><use href="#ball"/></svg></button>
      <button aria-label="自定义属性"><svg><use href="#props"/></svg></button>
      <button aria-label="论坛"><svg><use href="#forum"/></svg></button>
    </nav>
  </section>
</main>
</body>
</html>
```
FILE: styles.css
```css
* { box-sizing: border-box; }
body {
  margin: 0;
  height: 100vh;
  display: flex;
  flex-direction: column;
  overflow: hidden;
  background: #fff;
  color: #222;
  font: 9px/11px "Noto Sans", "Noto Sans CJK SC", sans-serif;
}
button { margin: 0; padding: 0; border: 0; background: none; font: inherit; color: inherit; }
input { font: inherit; border: 0; padding: 0; min-width: 0; background: none; outline: 0; }
svg { display: block; width: 16px; height: 16px; flex: none; }
.defs { position: absolute; width: 0; height: 0; }
.caret, .drop::after {
  content: "";
  display: block;
  flex: none;
  width: 0;
  height: 0;
  border: 2px solid transparent;
  border-top-color: #333;
  border-bottom: 0;
}

/* title bar */
.titlebar { display: flex; height: 26px; flex: none; background: #e5e5e5; border-bottom: 1px solid #d2d2d2; align-items: stretch; }
.menubar { display: flex; align-items: center; width: 324px; background: #f7f7f7; padding-left: 4px; border-top: 1px solid #e0e0e0; }
.logo { width: 16px; height: 16px; }
.brand { color: #d9231b; font: italic 10px/12px "Open Sans", sans-serif; margin-left: 1px; width: 84px; }
.menus { display: flex; font-size: 8px; }
.menus button { width: 33px; text-align: left; white-space: nowrap; }
.pin { margin-left: 5px; }
.pin svg { width: 12px; height: 12px; }
.quick { display: flex; align-items: center; padding-left: 18px; }
.home { margin-right: 6px; }
.drop { width: 14px; height: 20px; display: flex; align-items: center; justify-content: center; }
.dim-drop { opacity: .5; width: 12px; }
.picker { display: flex; height: 24px; width: 30px; margin-right: 4px; border: 1px solid #a5a5a5; }
.pick { width: 20px; background: #b3b3b3; display: flex; align-items: center; justify-content: center; }
.picker .drop { width: 8px; height: 22px; }
.props { margin-left: 6px; }
.doc { flex: 1; margin: 0; font: inherit; font-size: 8px; line-height: 26px; text-align: center; white-space: nowrap; }
.search { display: flex; align-items: center; gap: 5px; width: 69px; height: 17px; margin-top: 5px; padding-left: 3px; background: #fff; border: 1px solid #ccc; border-right: 0; }
.search svg { width: 11px; height: 11px; }
.search input { width: 48px; font-size: 8px; }
.search input::placeholder { color: #888; }

/* ribbon */
.ribbon { display: flex; flex: none; height: 58px; padding-left: 3px; background: #f7f7f7; border-bottom: 2px solid #ccc; font-size: 8px; }
.tool { display: flex; flex-direction: column; align-items: center; flex: none; padding-top: 2px; height: 56px; text-align: center; white-space: nowrap; }
.tool span { margin-top: 1px; }
.tool > .caret { margin-top: auto; margin-bottom: 4px; }
.tool.on { background: #b0b0b0; border: 1px solid #9a9a9a; border-top: 0; }
.tool:disabled { color: #bbb; }
.exit.on { background: linear-gradient(#b0b0b0 46px, #f0f0f0 46px); }
.w21 { width: 21px; }
.w22 { width: 22px; }
.w30 { width: 30px; }
.w40 { width: 40px; }
.w42 { width: 42px; }
.sep { border-right: 1px solid #ddd; }
.entities { display: grid; grid-template-columns: 26px 26px 26px 17px; grid-auto-rows: 18px; padding-top: 1px; padding-left: 1px; width: 97px; border-left: 1px solid #ddd; border-right: 1px solid #ddd; }
.entities button { display: flex; align-items: center; gap: 4px; }
.entities svg { width: 15px; height: 15px; }
.stack { display: grid; grid-auto-rows: 18px; padding-top: 1px; width: 89px; margin-left: 2px; padding-right: 2px; border-right: 1px solid #ddd; }
.stack button { display: flex; align-items: center; gap: 3px; white-space: nowrap; }
.stack svg { width: 15px; height: 15px; }
.stack .caret { margin-left: auto; }

/* command tabs and view toolbar */
.tabrow { display: flex; flex: none; height: 15px; background: #fff; }
.tabs { display: flex; flex: none; background: #d0d0d0; border-bottom: 1px solid #bbb; font-family: Lato, "Noto Sans CJK SC", sans-serif; }
.tabs button { width: 27px; border-right: 1px solid #aaa; white-space: nowrap; }
.tabs .active { background: #f7f7f7; color: #555; }
.tabs .w77 { width: 78px; }
.tabs .w86 { width: 86px; }
.tabs .w108 { width: 108px; }
.hud { display: flex; gap: 4px; margin-left: 45px; height: 19px; align-items: center; }
.hud button { display: flex; align-items: center; gap: 1px; }
.hud svg { width: 15px; height: 15px; }
.hud .caret { width: 4px; border-top-color: #777; }
.winbtns { display: flex; gap: 2px; height: 18px; margin-left: auto; padding-right: 3px; align-items: center; }

/* work area */
.work { display: flex; flex: 1; min-height: 0; }
.side { flex: none; width: 207px; background: #f7f7f7; border-right: 2px solid #ccc; border-left: 1px solid #ccc; border-top: 1px solid #bbb; }
.grip { height: 15px; border-bottom: 1px solid #ccc; display: flex; align-items: center; justify-content: center; margin-bottom: 1px; }
.dot { width: 5px; height: 5px; border: 1px solid #999; border-radius: 50%; background: #e5e5e5; }
.panes { display: flex; height: 19px; }
.panes button { width: 25px; background: #d0d0d0; border: 1px solid #b5b5b5; border-left: 0; display: flex; align-items: center; justify-content: center; }
.panes svg { width: 14px; height: 14px; }
.panes .active { background: #f7f7f7; border-color: transparent; border-right-color: #b5b5b5; }
.panes .more { background: none; border: 0; margin-left: auto; width: 16px; }
.filter { display: flex; align-items: center; height: 18px; margin: 0 2px 0 1px; padding-left: 2px; border: 1px solid #ccc; }
.filter svg { width: 14px; height: 14px; }
.filter input { flex: 1; }
.tree { display: flex; flex-direction: column; height: 497px; margin: 0; padding: 0; list-style: none; }
.tree li { flex: 1; display: flex; align-items: center; gap: 3px; padding-left: 18px; white-space: nowrap; }
.tree svg { width: 14px; height: 14px; }
.tree .root { padding-left: 1px; }
.tree .child { padding-left: 35px; }
.tree .off { color: #8a8a8a; }
.tree .rollback { box-shadow: 0 -1px #b4b1d0, inset 0 1px #b4b1d0; }
.tw { width: 0; height: 0; margin-left: -12px; margin-right: 6px; border: 3px solid transparent; border-left-color: #444; border-right: 0; }
.tw.open { margin-left: -13px; margin-right: 4px; border: 3px solid transparent; border-top-color: #444; border-bottom: 0; }

/* graphics area */
.view { position: relative; flex: 1; min-width: 0; overflow: hidden; }
.canvas { position: absolute; inset: 0; width: 100%; height: 100%; }
.plane-name { font: bold 15px "Noto Sans CJK SC", sans-serif; fill: #f79a3c; }
.dim { font: 9px "Liberation Sans", sans-serif; fill: #444; }
.flyout { position: absolute; left: -1px; top: 286px; width: 7px; height: 29px; background: #f7f7f7; border: 1px solid #bbb; border-left: 0; display: flex; align-items: center; }
.viewname { position: absolute; left: 5px; bottom: -4px; font-weight: bold; color: #111; }
.taskpane { position: absolute; right: 0; top: 20px; display: flex; flex-direction: column; width: 19px; height: 123px; background: #d0d0d0; border: 1px solid #aaa; border-right: 0; }
.taskpane button { flex: 1; display: flex; align-items: center; justify-content: center; border-bottom: 1px solid #aaa; }
.taskpane .active { background: #fff; }
.taskpane svg { width: 15px; height: 15px; }
```
